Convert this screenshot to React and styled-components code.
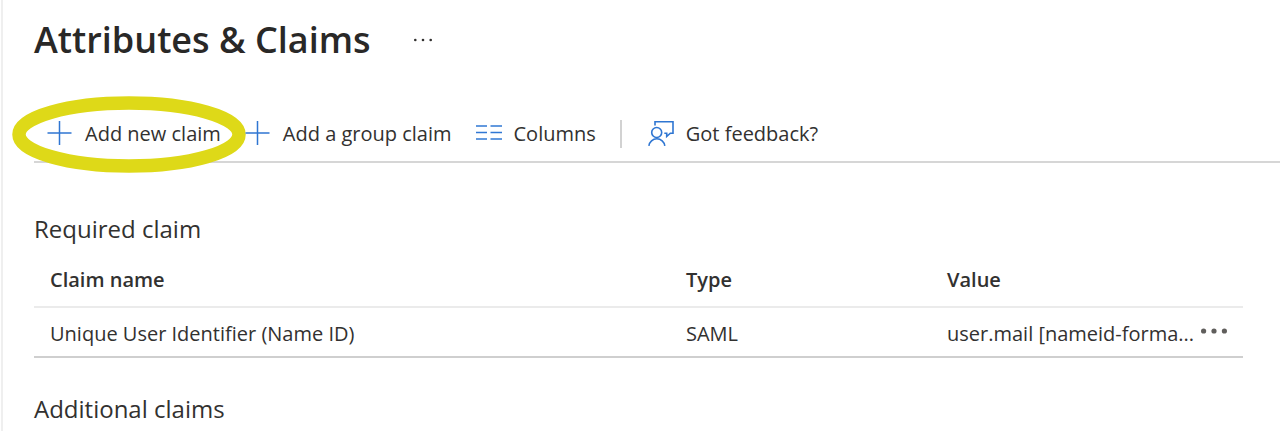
import React from 'react';
import styled, { createGlobalStyle } from 'styled-components';

const GlobalStyle = createGlobalStyle`
  * { box-sizing: border-box; }
  body {
    margin: 0;
    background: #fff;
    color: #323130;
    font: 20px/28px "Open Sans", "Noto Sans", sans-serif;
  }
  button {
    border: 0;
    padding: 0;
    background: none;
    color: inherit;
    font: inherit;
    cursor: pointer;
  }
`;

const Page = styled.main`
  min-height: 100vh;
  margin-left: 1px;
  padding: 16px 0 4px 31px;
  border-left: 2px solid #efefef;
`;

const Header = styled.header`
  display: flex;
  align-items: center;
  gap: 42px;
`;

const Title = styled.h1`
  margin: 0;
  color: #292827;
  font-size: 36px;
  line-height: 48px;
  font-weight: 600;
`;

const IconButton = styled.button`
  display: inline-flex;
  vertical-align: middle;
`;

const Toolbar = styled.div`
  display: flex;
  align-items: center;
  height: 57px;
  margin-top: 42px;
  padding-left: 13px;
  border-bottom: 2px solid #d6d6d6;
`;

const Command = styled.button`
  position: relative;
  display: flex;
  align-items: center;
  gap: 12px;
  margin-right: 24px;
  white-space: nowrap;
`;

const Divider = styled.span`
  width: 2px;
  height: 28px;
  margin-right: 26px;
  background: #d2d2d2;
`;

const Highlight = styled.svg`
  position: absolute;
  left: -36px;
  top: -24px;
  pointer-events: none;
`;

const Section = styled.section`
  margin: ${(p) => p.$gap}px 37px 0 0;
`;

const SectionTitle = styled.h2`
  margin: 0;
  font-size: 24px;
  line-height: 34px;
  font-weight: 400;
`;

const Table = styled.table`
  width: 100%;
  margin-top: 5px;
  table-layout: fixed;
  border-collapse: separate;
  border-spacing: 0;
  text-align: left;
`;

const Col = styled.col`
  width: ${(p) => p.$width};
`;

const HeadCell = styled.th`
  height: 57px;
  padding: 2px 16px 0;
  border-bottom: 2px solid #ebebeb;
  font-weight: 600;
`;

const Cell = styled.td`
  height: 50px;
  padding: 4px ${(p) => (p.$flush ? 0 : 16)}px 0 16px;
  border-bottom: 2px solid #cfcfcf;
  white-space: nowrap;
`;

const MenuCell = styled(Cell)`
  padding: 0 0 6px 13px;
`;

const PlusIcon = () => (
  <svg width="26" height="26" viewBox="0 0 26 26" fill="none" stroke="#2f76d2" strokeWidth="1.5" aria-hidden="true">
    <path d="M12.5 0v24M.5 12h24" />
  </svg>
);

const ColumnsIcon = () => (
  <svg width="26" height="26" viewBox="0 0 26 26" fill="none" stroke="#3178d4" strokeWidth="1.5" aria-hidden="true">
    <path d="M0 5H11M14.5 5H26M0 11.5H11M14.5 11.5H26M0 18H11M14.5 18H26" />
  </svg>
);

const FeedbackIcon = () => (
  <svg width="26" height="26" viewBox="0 0 26 26" fill="none" stroke="#2f76d2" strokeWidth="1.6" aria-hidden="true">
    <circle cx="8.7" cy="11.5" r="5" />
    <path d="M.9 24.9a8 8 0 0 1 15.9 0M7 4.5V.8h18v11.4h-2.7l-3.6 3.3v-3.3h-2.4" />
  </svg>
);

const DotsIcon = ({ width, radius, color }) => (
  <svg width={width} height="8" viewBox={`0 0 ${width} 8`} fill={color} aria-hidden="true">
    <circle cx={radius + 1} cy="4" r={radius} />
    <circle cx={width / 2} cy="4" r={radius} />
    <circle cx={width - radius - 1} cy="4" r={radius} />
  </svg>
);

export default function App() {
  return (
    <>
      <GlobalStyle />
      <Page>
        <Header>
          <Title>Attributes &amp; Claims</Title>
          <IconButton aria-label="More options">
            <DotsIcon width={20} radius={1.3} color="#323130" />
          </IconButton>
        </Header>
        <Toolbar>
          <Command>
            <PlusIcon />
            Add new claim
            <Highlight width="236" height="78" viewBox="0 0 236 78" aria-hidden="true">
              <ellipse cx="118" cy="38.5" rx="110" ry="31.5" fill="none" stroke="#ded918" strokeWidth="13.5" />
            </Highlight>
          </Command>
          <Command>
            <PlusIcon />
            Add a group claim
          </Command>
          <Command>
            <ColumnsIcon />
            Columns
          </Command>
          <Divider />
          <Command>
            <FeedbackIcon />
            Got feedback?
          </Command>
        </Toolbar>
        <Section $gap={49}>
          <SectionTitle>Required claim</SectionTitle>
          <Table>
            <colgroup>
              <Col $width="auto" />
              <Col $width="261px" />
              <Col $width="256px" />
              <Col $width="56px" />
            </colgroup>
            <thead>
              <tr>
                <HeadCell scope="col">Claim name</HeadCell>
                <HeadCell scope="col">Type</HeadCell>
                <HeadCell scope="col" colSpan={2}>Value</HeadCell>
              </tr>
            </thead>
            <tbody>
              <tr>
                <Cell>Unique User Identifier (Name ID)</Cell>
                <Cell>SAML</Cell>
                <Cell $flush>user.mail [nameid-forma...</Cell>
                <MenuCell>
                  <IconButton aria-label="Claim actions">
                    <DotsIcon width={28} radius={2.6} color="#605e5c" />
                  </IconButton>
                </MenuCell>
              </tr>
            </tbody>
          </Table>
        </Section>
        <Section $gap={34}>
          <SectionTitle>Additional claims</SectionTitle>
        </Section>
      </Page>
    </>
  );
}
